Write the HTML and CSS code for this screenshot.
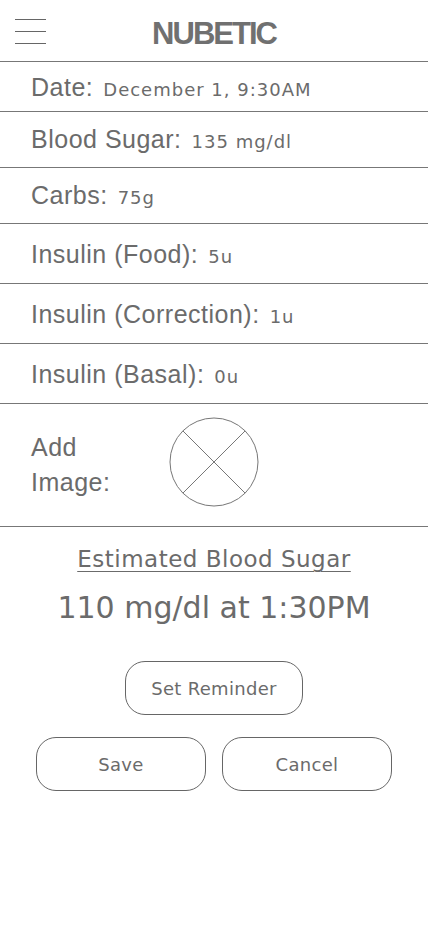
FILE: index.html
```html
<!DOCTYPE html>
<html lang="en">
<head>
<meta charset="utf-8">
<title>Nubetic</title>
<link rel="stylesheet" href="styles.css">
</head>
<body>
<div class="app">
  <header class="header">
    <div class="menu" aria-label="Menu">
      <span></span><span></span><span></span>
    </div>
    <h1 class="title">NUBETIC</h1>
  </header>
  <div class="row row-date"><span class="label">Date:</span><span class="value">December 1, 9:30AM</span></div>
  <div class="row row-m"><span class="label">Blood Sugar:</span><span class="value">135 mg/dl</span></div>
  <div class="row row-m"><span class="label">Carbs:</span><span class="value">75g</span></div>
  <div class="row row-l"><span class="label">Insulin (Food):</span><span class="value">5u</span></div>
  <div class="row row-l"><span class="label">Insulin (Correction):</span><span class="value">1u</span></div>
  <div class="row row-l"><span class="label">Insulin (Basal):</span><span class="value">0u</span></div>
  <div class="row row-image">
    <span class="label label-image">Add<br>Image:</span>
    <svg class="placeholder" width="90" height="90" viewBox="0 0 90 90">
      <circle cx="45" cy="45" r="44" fill="none" stroke="#777" stroke-width="1"/>
      <line x1="13.9" y1="13.9" x2="76.1" y2="76.1" stroke="#777" stroke-width="1"/>
      <line x1="76.1" y1="13.9" x2="13.9" y2="76.1" stroke="#777" stroke-width="1"/>
    </svg>
  </div>
  <section class="estimate">
    <h2 class="est-title">Estimated Blood Sugar</h2>
    <p class="est-value">110 mg/dl at 1:30PM</p>
    <button class="btn btn-reminder">Set Reminder</button>
    <div class="actions">
      <button class="btn btn-action">Save</button>
      <button class="btn btn-action">Cancel</button>
    </div>
  </section>
</div>
</body>
</html>
```

FILE: styles.css
```css
* { box-sizing: border-box; }
html, body { margin: 0; padding: 0; background: #fff; }
body { color: #6b6b6b; font-family: "Liberation Sans", Arial, sans-serif; }
.app { width: 428px; display: flex; flex-direction: column; }

.header {
  height: 62px;
  border-bottom: 1px solid #777;
  display: flex;
  align-items: flex-start;
  position: relative;
}
.menu {
  width: 31px;
  margin: 19px 0 0 15px;
  display: flex;
  flex-direction: column;
  gap: 11px;
}
.menu span { display: block; height: 1px; background: #666; }
.title {
  position: absolute;
  left: 0; right: 0; top: 14px;
  margin: 0;
  text-align: center;
  font-size: 31px;
  font-weight: bold;
  letter-spacing: -2px;
  color: #707070;
  line-height: 40px;
}

.row {
  display: flex;
  align-items: baseline;
  padding-left: 31px;
  border-bottom: 1px solid #777;
}
.row-date { height: 50px; padding-top: 10px; }
.row-m { height: 56px; padding-top: 12px; }
.row-l { height: 60px; padding-top: 15px; }
.label { font-size: 25px; line-height: 30px; margin-right: 10px; letter-spacing: 0.5px; }
.value { font-family: "DejaVu Sans", sans-serif; font-size: 18px; letter-spacing: 1px; }

.row-image { height: 123px; align-items: flex-start; padding-top: 26px; }
.label-image { line-height: 35px; width: 138px; margin: 0; }
.placeholder { margin-top: -13px; }

.estimate { display: flex; flex-direction: column; align-items: center; }
.est-title {
  margin: 17px 0 0;
  font-family: "DejaVu Sans", sans-serif;
  font-weight: normal;
  font-size: 23px;
  line-height: 30px;
  letter-spacing: 0.5px;
  text-decoration: underline;
  text-underline-offset: 4px;
  text-decoration-thickness: 1px;
}
.est-value {
  margin: 16px 0 0;
  font-family: "DejaVu Sans", sans-serif;
  font-size: 30px;
  line-height: 36px;
  letter-spacing: 0;
}
.btn {
  font-family: "DejaVu Sans", sans-serif;
  font-size: 18px;
  letter-spacing: 0.3px;
  color: #6b6b6b;
  background: #fff;
  border: 1px solid #666;
  border-radius: 20px;
  padding: 0;
}
.btn-reminder { width: 178px; height: 54px; margin-top: 35px; }
.actions { display: flex; gap: 16px; margin-top: 22px; }
.btn-action { width: 170px; height: 54px; }
```
